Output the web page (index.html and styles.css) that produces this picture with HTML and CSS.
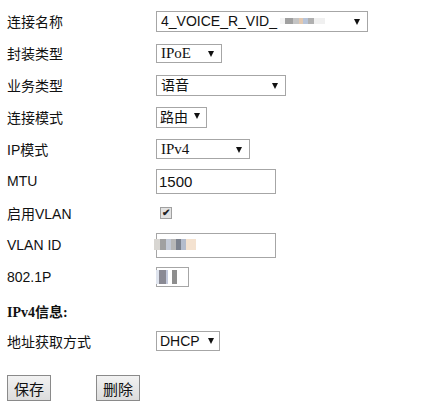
FILE: index.html
```html
<!DOCTYPE html>
<html lang="zh-CN">

<head>
    <meta charset="UTF-8">
    <title>WAN 连接</title>
    <link rel="stylesheet" href="styles.css">
</head>

<body>
    <div class="form">
        <div class="label">连接名称</div>
        <div><span class="sel sel-name"><span class="val">4_VOICE_R_VID_</span><span class="blur blur-vid"></span></span></div>

        <div class="label">封装类型</div>
        <div><span class="sel sel-type"><span class="val serif">IPoE</span></span></div>

        <div class="label">业务类型</div>
        <div><span class="sel sel-service"><span class="val">语音</span></span></div>

        <div class="label">连接模式</div>
        <div><span class="sel sel-mode"><span class="val">路由</span></span></div>

        <div class="label">IP模式</div>
        <div><span class="sel sel-ip"><span class="val serif">IPv4</span></span></div>

        <div class="label">MTU</div>
        <div><input class="txt txt-wide" type="text" value="1500"></div>

        <div class="label">启用VLAN</div>
        <div><span class="check">&#10004;</span></div>

        <div class="label">VLAN ID</div>
        <div><span class="txt txt-wide"><span class="blur blur-vlan"></span></span></div>

        <div class="label">802.1P</div>
        <div><span class="txt txt-small"><span class="blur blur-prio"></span></span></div>

        <div class="label heading">IPv4信息:</div>
        <div></div>

        <div class="label">地址获取方式</div>
        <div><span class="sel sel-dhcp"><span class="val">DHCP</span></span></div>
    </div>

    <div class="buttons">
        <button class="btn btn-save">保存</button>
        <button class="btn">删除</button>
    </div>
</body>

</html>
```

FILE: styles.css
```css
* {
    margin: 0;
    padding: 0;
    box-sizing: border-box;
}

body {
    font-family: "Liberation Sans", "Noto Sans CJK SC", sans-serif;
    font-size: 14px;
    color: #111;
    background: #fff;
    padding: 5px 0 0 7px;
}

.form {
    display: grid;
    grid-template-columns: 149px auto;
    grid-auto-rows: 32px;
    align-items: center;
}

.form > div {
    display: flex;
    align-items: center;
}

.label {
    font-size: 14px;
}

.heading {
    font-weight: bold;
    font-family: "Liberation Serif", "Noto Sans CJK SC", serif;
    padding-top: 3px;
}

.serif {
    font-family: "Liberation Serif", "Noto Sans CJK SC", serif;
    font-size: 15px;
}

/* 下拉框 */
.sel {
    position: relative;
    display: flex;
    align-items: center;
    height: 21px;
    border: 1px solid #a6a6a6;
    background: #fff;
    padding-left: 4px;
    font-size: 14px;
    line-height: 19px;
    white-space: nowrap;
}

.sel::after {
    content: "";
    position: absolute;
    top: 7px;
    right: 7px;
    border-left: 3px solid transparent;
    border-right: 3px solid transparent;
    border-top: 6px solid #111;
}

.sel-name { width: 212px; }
.sel-type { width: 66px; height: 19px; }
.sel-service { width: 130px; }
.sel-mode { width: 51px; padding-left: 3px; }
.sel-ip { width: 94px; height: 20px; }
.sel-dhcp { width: 64px; height: 20px; padding-left: 3px; }

.sel-type::after { top: 6px; }
.sel-mode::after { right: 6px; top: 5px; }
.sel-dhcp::after { right: 5px; top: 6px; }

/* 输入框 */
.txt {
    display: flex;
    align-items: center;
    height: 25px;
    border: 1px solid #a6a6a6;
    background: #fff;
    font-family: "Liberation Sans", sans-serif;
    font-size: 15px;
    color: #111;
    padding-left: 2px;
    outline: none;
}

.txt-wide { width: 120px; }
.txt-small { width: 33px; height: 20px; padding-left: 0; }

.check {
    display: flex;
    align-items: center;
    justify-content: center;
    width: 12px;
    height: 12px;
    margin-left: 4px;
    border: 1px solid #a0a0a0;
    background: #e2e2e2;
    font-size: 10px;
    font-weight: bold;
    color: #222;
    line-height: 1;
}

/* 打码部分 */
.blur {
    display: inline-block;
}

.blur-vid {
    width: 45px;
    height: 6px;
    margin-left: 3px;
    background: linear-gradient(90deg, #f4f4f4 0 12%, #a0a0a0 12% 30%, #c4c4c4 30% 42%, #e2c8b0 42% 52%, #b8c4d8 52% 62%, #b0b0b0 62% 76%, #f0f0f0 76% 100%);
}

.blur-vlan {
    width: 42px;
    height: 11px;
    margin-left: -5px;
    margin-top: -2px;
    background: linear-gradient(90deg, #d8d6d2 0 14%, #a0a0a0 14% 28%, #c4cad6 28% 40%, #b8b8b8 40% 52%, #7c828e 52% 64%, #b4bccc 64% 76%, #f4e2d0 76% 100%);
}

.blur-prio {
    width: 26px;
    height: 14px;
    margin-left: -1px;
    background: linear-gradient(90deg, #dfe4ee 0 12%, #8a8a94 12% 38%, #c4cadc 38% 48%, #fff 48% 62%, #8e8e8e 62% 80%, #fff 80% 100%);
}

/* 按钮 */
.buttons {
    display: flex;
    gap: 45px;
    margin-top: 18px;
}

.btn {
    width: 44px;
    height: 26px;
    border: 1px solid #8a8a8a;
    background: linear-gradient(#f2f2f2, #dcdcdc);
    font-family: "Noto Sans CJK SC", sans-serif;
    font-size: 15px;
    color: #111;
}
```
